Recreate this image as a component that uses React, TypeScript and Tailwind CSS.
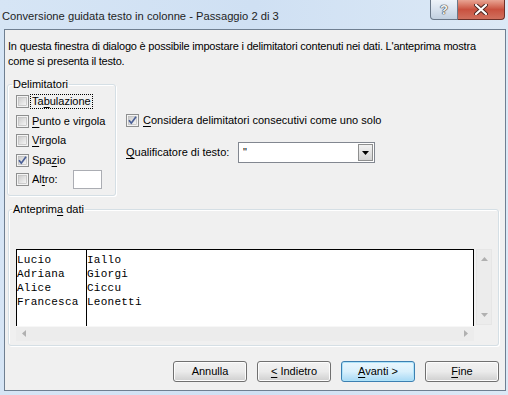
import type { ReactNode } from 'react';

const ui = { fontFamily: '"Liberation Sans", Arial, sans-serif' };
const mono = { fontFamily: '"Liberation Mono", "Courier New", monospace' };

function Check({ checked = false }: { checked?: boolean }) {
  return (
    <svg width="13" height="13" viewBox="0 0 13 13" className="shrink-0">
      <defs>
        <linearGradient id="cbg" x1="0" y1="0" x2="1" y2="1">
          <stop offset="0" stopColor="#cbcbcb" />
          <stop offset="1" stopColor="#f7f7f7" />
        </linearGradient>
      </defs>
      <rect x="0.5" y="0.5" width="12" height="12" fill="#f4f4f4" stroke="#8e8f8f" />
      <rect x="2.5" y="2.5" width="8" height="8" fill="url(#cbg)" stroke="#b4b4b4" strokeWidth="0.6" />
      {checked && <path d="M3 6.2 L5.3 9.2 L10 2.8" fill="none" stroke="#4a5f97" strokeWidth="1.7" />}
    </svg>
  );
}

function U({ children }: { children: ReactNode }) {
  return <span className="underline underline-offset-[2px]">{children}</span>;
}

function CheckRow({ checked, children, focus }: { checked?: boolean; children: ReactNode; focus?: boolean }) {
  return (
    <div className="flex h-[19.5px] items-center gap-[3px]">
      <Check checked={checked} />
      <span className={focus ? 'outline outline-1 outline-dotted outline-black px-[1px] -ml-[1px] leading-[13px]' : 'leading-[13px]'}>
        {children}
      </span>
    </div>
  );
}

function Btn({ children, primary }: { children: ReactNode; primary?: boolean }) {
  return (
    <button
      className={`h-[21px] w-[74px] rounded-[3px] border text-[11px] text-black ${
        primary
          ? 'border-[#3c7fb1] bg-gradient-to-b from-[#eaf6fd] via-[#d9f0fc] to-[#a7d9f5] shadow-[inset_0_0_0_1px_#aee3f9]'
          : 'border-[#707070] bg-gradient-to-b from-[#f2f2f2] via-[#ebebeb] to-[#cfcfcf] shadow-[inset_0_0_0_1px_#fcfcfc]'
      }`}
      style={ui}
    >
      {children}
    </button>
  );
}

function Arrow({ dir }: { dir: 'up' | 'down' | 'left' | 'right' }) {
  const d = {
    up: 'M0 4 L3.5 0 L7 4 Z',
    down: 'M0 0 L7 0 L3.5 4 Z',
    left: 'M4 0 L4 7 L0 3.5 Z',
    right: 'M0 0 L4 3.5 L0 7 Z',
  }[dir];
  const vert = dir === 'up' || dir === 'down';
  return (
    <svg width={vert ? 7 : 4} height={vert ? 4 : 7} viewBox={vert ? '0 0 7 4' : '0 0 4 7'}>
      <path d={d} fill="#b0b0b0" />
    </svg>
  );
}

const rows = [
  ['Lucio', 'Iallo'],
  ['Adriana', 'Giorgi'],
  ['Alice', 'Ciccu'],
  ['Francesca', 'Leonetti'],
];

export default function App() {
  return (
    <div className="flex h-[395px] w-[508px] flex-col overflow-hidden bg-gradient-to-r from-[#d6e5f5] via-[#cfe0f3] to-[#dce9f6] text-black" style={ui}>
      {/* title bar */}
      <div className="flex h-[29px] shrink-0 items-start justify-between">
        <div className="pl-[2px] pt-[9px] text-[11.2px] leading-[14px] text-[#1e1e1e]">
          Conversione guidata testo in colonne - Passaggio 2 di 3
        </div>
        <div className="mr-[3px] flex">
          <div className="flex h-[20px] w-[28px] items-center justify-center rounded-bl-[4px] border border-t-0 border-[#6a7889] bg-gradient-to-b from-[#eef3f9] via-[#d8e2ee] to-[#c2d0e0]">
            <span className="text-[13px] font-bold leading-none text-[#f4f6f8] [text-shadow:0_0_1px_#333,0_0_1px_#333,0_0_1px_#333]">?</span>
          </div>
          <div className="flex h-[20px] w-[47px] items-center justify-center rounded-br-[4px] border border-l-0 border-t-0 border-[#6e3028] bg-gradient-to-b from-[#e8a493] via-[#c9513f] to-[#d0705e]">
            <svg width="14" height="11" viewBox="0 0 14 11">
              <path d="M2 1 L12 10 M12 1 L2 10" stroke="#4a2420" strokeWidth="4" strokeLinecap="round" />
              <path d="M2 1 L12 10 M12 1 L2 10" stroke="#ffffff" strokeWidth="2.2" strokeLinecap="round" />
            </svg>
          </div>
        </div>
      </div>

      {/* client area */}
      <div className="ml-[4px] mr-[2px] flex h-[362px] shrink-0 flex-col border border-[#6f7f91] bg-[#f0f0f0] text-[11px]">
        <p className="pl-[3px] pr-[4px] pt-[9px] leading-[15px] tracking-[-0.2px]">
          In questa finestra di dialogo è possibile impostare i delimitatori contenuti nei dati. L'anteprima mostra come si presenta il testo.
        </p>

        <div className="mt-[8px] flex pl-[2px]">
          <fieldset className="h-[119px] w-[109px] rounded-[3px] border border-[#d5dfe5] pl-[8px] shadow-[inset_1px_1px_0_#fff,1px_1px_0_#fff]">
            <legend className="-ml-[4px] px-[1px] leading-[14px]">Delimitatori</legend>
            <div className="pt-[1px]">
              <CheckRow focus>
                Ta<U>b</U>ulazione
              </CheckRow>
              <CheckRow>
                <U>P</U>unto e virgola
              </CheckRow>
              <CheckRow>
                <U>V</U>irgola
              </CheckRow>
              <CheckRow checked>
                Spa<U>z</U>io
              </CheckRow>
              <div className="flex h-[19.5px] items-center gap-[3px]">
                <Check />
                <span className="w-[38px] leading-[13px]">
                  Al<U>t</U>ro:
                </span>
                <div className="h-[19px] w-[29px] border border-[#abadb3] bg-white" />
              </div>
            </div>
          </fieldset>

          <div className="ml-[10px] flex flex-col pt-[35px]">
            <div className="flex h-[16px] items-center gap-[4px]">
              <Check checked />
              <span>
                <U>C</U>onsidera delimitatori consecutivi come uno solo
              </span>
            </div>
            <div className="mt-[14px] flex items-center">
              <span className="w-[112px]">
                <U>Q</U>ualificatore di testo:
              </span>
              <div className="flex h-[21px] w-[137px] items-center justify-between border border-[#828790] bg-white pl-[4px] pr-[1px]">
                <span className="leading-none">"</span>
                <div className="flex h-[17px] w-[15px] items-center justify-center border border-[#8e8f8f] bg-gradient-to-b from-[#f2f2f2] to-[#d4d4d4]">
                  <svg width="7" height="4" viewBox="0 0 7 4">
                    <path d="M0 0 L7 0 L3.5 4 Z" fill="#000" />
                  </svg>
                </div>
              </div>
            </div>
          </div>
        </div>

        <fieldset className="ml-[3px] mt-[6px] h-[144px] w-[491px] rounded-[3px] border border-[#d5dfe5] pl-[7px] shadow-[inset_1px_1px_0_#fff,1px_1px_0_#fff]">
          <legend className="-ml-[4px] px-[1px] leading-[14px]">
            Anteprim<U>a</U> dati
          </legend>
          <div className="mt-[33px] flex gap-[2px]">
            <div className="flex flex-col">
              <div className="flex h-[77px] w-[458px] border border-b-0 border-black bg-white pt-[3px] text-[11px] leading-[14px] tracking-[0.25px]" style={mono}>
                <div className="-mt-[3px] h-[77px] w-[70px] border-r border-black pt-[3px]">
                  {rows.map((r) => (
                    <div key={r[0]}>{r[0]}</div>
                  ))}
                </div>
                <div>
                  {rows.map((r) => (
                    <div key={r[1]}>{r[1]}</div>
                  ))}
                </div>
              </div>
              <div className="flex h-[15px] w-[458px] items-center justify-between bg-[#ececec] px-[6px] shadow-[inset_0_1px_0_#f7f7f7]">
                <Arrow dir="left" />
                <Arrow dir="right" />
              </div>
            </div>
            <div className="flex h-[76px] w-[16px] flex-col items-center justify-between border border-[#e6e6e6] bg-[#ececec] py-[7px]">
              <Arrow dir="up" />
              <Arrow dir="down" />
            </div>
          </div>
        </fieldset>

        <div className="mt-[15px] flex justify-end gap-[10px] pr-[6px]">
          <Btn>Annulla</Btn>
          <Btn>
            <U>&lt;</U> Indietro
          </Btn>
          <Btn primary>
            <U>A</U>vanti &gt;
          </Btn>
          <Btn>
            <U>F</U>ine
          </Btn>
        </div>
      </div>
    </div>
  );
}
